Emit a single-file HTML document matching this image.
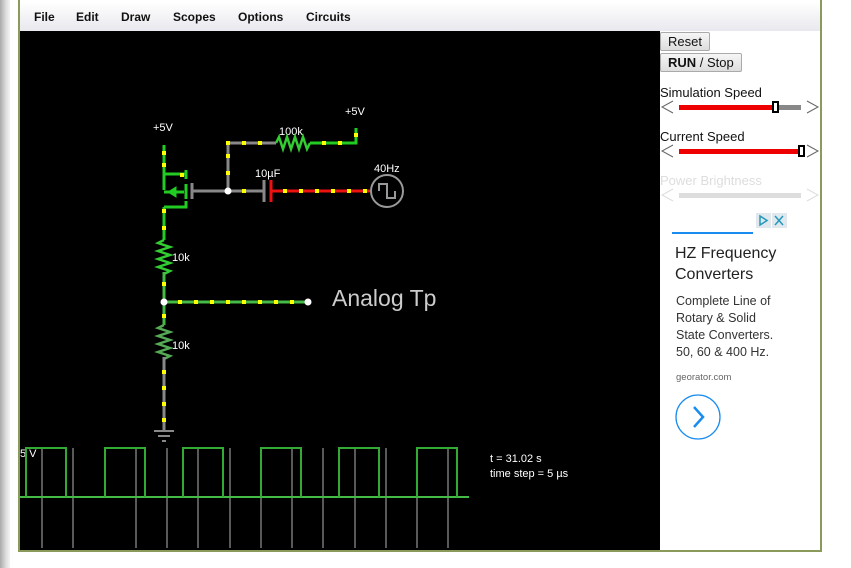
<!DOCTYPE html>
<html><head><meta charset="utf-8"><style>
body{margin:0;width:851px;height:568px;background:#fff;position:relative;overflow:hidden;font-family:"Liberation Sans",sans-serif}
.lbar{position:absolute;left:0;top:0;width:10px;height:568px;background:linear-gradient(90deg,#aaa,#ddd 60%,#f4f4f4)}
.frame{position:absolute;left:18px;top:0;width:800px;height:550px;border:2px solid #8a9a5b;border-top:none}
.menu{position:absolute;left:20px;top:2px;width:800px;height:29px;background:linear-gradient(#fff,#e8e8ee)}
.menu span{position:absolute;top:8px;font-size:12px;font-weight:bold;color:#111}
.canvas{position:absolute;left:20px;top:31px;width:640px;height:519px;background:#000}
.btn{position:absolute;border:1px solid #aaa;background:linear-gradient(#f6f6f6,#ddd);font-size:13px;color:#111;padding:1px 7px;border-radius:2px}
.lab{position:absolute;font-size:13px;color:#111}
</style></head><body>
<div class="lbar"></div>
<div class="frame"></div>
<div class="menu"><span style="left:14px">File</span><span style="left:56px">Edit</span><span style="left:101px">Draw</span><span style="left:153px">Scopes</span><span style="left:218px">Options</span><span style="left:286px">Circuits</span></div>
<div class="canvas"></div>
<svg style="position:absolute;left:0;top:0" width="851" height="568">
<g font-family="Liberation Sans" font-size="11" fill="#fff">
<text x="153" y="131">+5V</text><text x="345" y="115">+5V</text><text x="279" y="135">100k</text>
<text x="255" y="177">10µF</text><text x="374" y="172">40Hz</text><text x="172" y="261">10k</text><text x="172" y="349">10k</text>
<text x="20" y="457">5 V</text><text x="490" y="462" font-size="11">t = 31.02 s</text><text x="490" y="477">time step = 5 µs</text>
</g>
<text x="332" y="306" font-family="Liberation Sans" font-size="23" fill="#ccc">Analog Tp</text>
<g fill="none" stroke-width="3">
<path d="M164 145V190M164 174H186M186 170V179M164 192H184M164 207H186V201M164 207V240" stroke="#2c2"/>
<path d="M168 192l8-5v10z" fill="#2c2" stroke="#2c2" stroke-width="1"/>
<path d="M186 184V199" stroke="#2c2"/>
<path d="M192 183V199M192 191H228V143H276M228 191H264" stroke="#888"/>
<path d="M276 143l3-6 4 12 4-12 4 12 4-12 4 12 4-12 4 12 3-6" stroke="#3c3" stroke-width="2.5"/>
<path d="M310 143H356V128" stroke="#2c2"/>
<path d="M264 180V202" stroke="#888"/>
<path d="M271 180V202M271 191H370" stroke="#e11"/>
<circle cx="387" cy="191" r="16" stroke="#999" stroke-width="2"/>
<path d="M379 191V184h8v14h8v-7" stroke="#999" stroke-width="2"/>
<path d="M164 240l-6 3 12 4-12 4 12 4-12 4 12 4-12 4 12 4-6 3" stroke="#3c3" stroke-width="2.5"/>
<path d="M164 272V325M164 302H308" stroke="#4b4"/>
<path d="M164 325l-6 3 12 4-12 4 12 4-12 4 12 4-12 4 12 4-6 3" stroke="#5a5" stroke-width="2.5"/>
<path d="M164 357V430" stroke="#888"/>
<path d="M154 431H174M158 436H170M162 441H166" stroke="#888" stroke-width="2"/>
</g>
<circle cx="228" cy="191" r="3.5" fill="#fff"/><circle cx="164" cy="302" r="3.5" fill="#fff"/><circle cx="308" cy="302" r="3.5" fill="#fff"/>
<g fill="#ff0">
<rect x="162" y="163" width="4" height="4"/><rect x="162" y="151" width="4" height="4"/><rect x="180" y="173" width="4" height="4"/>
<rect x="226" y="171" width="4" height="4"/><rect x="226" y="154" width="4" height="4"/><rect x="226" y="141" width="4" height="4"/>
<rect x="242" y="141" width="4" height="4"/><rect x="258" y="141" width="4" height="4"/><rect x="322" y="141" width="4" height="4"/><rect x="338" y="141" width="4" height="4"/><rect x="354" y="133" width="4" height="4"/>
<rect x="242" y="189" width="4" height="4"/><rect x="283" y="189" width="4" height="4"/><rect x="299" y="189" width="4" height="4"/><rect x="315" y="189" width="4" height="4"/><rect x="331" y="189" width="4" height="4"/><rect x="347" y="189" width="4" height="4"/><rect x="363" y="189" width="4" height="4"/>
<rect x="162" y="209" width="4" height="4"/><rect x="162" y="226" width="4" height="4"/><rect x="162" y="282" width="4" height="4"/>
<rect x="178" y="300" width="4" height="4"/><rect x="194" y="300" width="4" height="4"/><rect x="210" y="300" width="4" height="4"/><rect x="226" y="300" width="4" height="4"/><rect x="242" y="300" width="4" height="4"/><rect x="258" y="300" width="4" height="4"/><rect x="274" y="300" width="4" height="4"/><rect x="290" y="300" width="4" height="4"/>
<rect x="162" y="314" width="4" height="4"/><rect x="162" y="370" width="4" height="4"/><rect x="162" y="386" width="4" height="4"/><rect x="162" y="402" width="4" height="4"/><rect x="162" y="418" width="4" height="4"/>
</g>
<g stroke="#777" stroke-width="1.5">
<path d="M42 448V548M73 448V548M136 448V548M167 448V548M198 448V548M230 448V548M261 448V548M292 448V548M323 448V548M355 448V548M386 448V548M417 448V548M448 448V548"/>
</g>
<path d="M20 497H469" stroke="#4b4" stroke-width="2"/>
<path d="M26 497V448H66V497M105 497V448H145V497M183 497V448H223V497M261 497V448H301V497M339 497V448H379V497M417 497V448H457V497" fill="none" stroke="#3a3" stroke-width="2"/>
<g fill="none" stroke="#666" stroke-width="1">
<path d="M673 101l-11 6 11 6M807 101l11 6-11 6M673 145l-11 6 11 6M807 145l11 6-11 6"/>
<path d="M673 189l-11 6 11 6M807 189l11 6-11 6" stroke="#ddd"/>
</g>
<rect x="679" y="105" width="96" height="5" fill="#e00"/><rect x="775" y="105" width="26" height="5" fill="#888"/>
<rect x="773" y="102" width="5" height="10" fill="#fff" stroke="#000" stroke-width="2"/>
<rect x="679" y="149" width="122" height="5" fill="#e00"/>
<rect x="799" y="146" width="5" height="10" fill="#fff" stroke="#000" stroke-width="2"/>
<rect x="679" y="193" width="122" height="5" fill="#ddd"/>
<rect x="672" y="232" width="81" height="2" fill="#1a8cf0"/>
<rect x="756" y="213" width="15" height="15" fill="#e0e8ee"/><rect x="772" y="213" width="15" height="15" fill="#e0e8ee"/>
<path d="M760 216v9l7-4.5z" fill="none" stroke="#29b" stroke-width="1.5"/><path d="M775 216l8 9M783 216l-8 9" stroke="#29b" stroke-width="1.5"/>
<circle cx="698" cy="417" r="22" fill="none" stroke="#1a8cf0" stroke-width="1.3"/>
<path d="M694 407l9 10-9 10" fill="none" stroke="#1a8cf0" stroke-width="2.5"/>
</svg>
<div class="btn" style="left:660px;top:32px">Reset</div>
<div class="btn" style="left:660px;top:53px"><b>RUN</b> / Stop</div>
<div class="lab" style="left:660px;top:85px">Simulation Speed</div>
<div class="lab" style="left:660px;top:129px">Current Speed</div>
<div class="lab" style="left:660px;top:173px;color:#ddd">Power Brightness</div>
<div class="lab" style="left:675px;top:243px;font-size:16px;line-height:21px;color:#222">HZ Frequency<br>Converters</div>
<div class="lab" style="left:676px;top:293px;font-size:12.5px;line-height:17px;color:#333">Complete Line of<br>Rotary &amp; Solid<br>State Converters.<br>50, 60 &amp; 400 Hz.</div>
<div class="lab" style="left:676px;top:372px;font-size:9.5px;color:#666">georator.com</div>
</body></html>
